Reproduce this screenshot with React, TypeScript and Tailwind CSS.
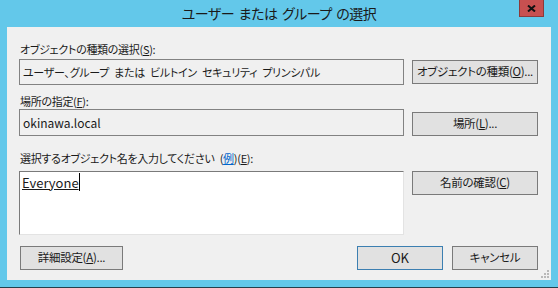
import React from "react";

const font = "font-['Noto_Sans_CJK_JP','Noto_Sans',sans-serif] [font-feature-settings:'palt']";

function Btn({
  children,
  className = "",
  primary = false,
}: {
  children: React.ReactNode;
  className?: string;
  primary?: boolean;
}) {
  return (
    <button
      className={`h-[24px] flex items-center justify-center whitespace-nowrap bg-[#e1e1e1] text-[11.5px] tracking-[-0.3px] text-[#1a1a1a] border ${
        primary ? "border-[#3c7fb1]" : "border-[#7a7a7a]"
      } ${className}`}
    >
      <span>{children}</span>
    </button>
  );
}

function ResizeGrip() {
  const dots = [
    [6, 0],
    [3, 3],
    [6, 3],
    [0, 6],
    [3, 6],
    [6, 6],
  ];
  return (
    <svg width="8" height="8" className="absolute right-[2px] bottom-[2px]">
      {dots.map(([x, y]) => (
        <rect key={`${x}-${y}`} x={x} y={y} width="2" height="2" fill="#b8b8b8" />
      ))}
    </svg>
  );
}

export default function App() {
  return (
    <div className={`w-[558px] h-[288px] bg-[#63c8ea] relative border-b border-[#24404d] ${font}`}>
      {/* title bar */}
      <div className="h-[27px] flex items-center justify-center text-[14px] tracking-[-0.5px] [word-spacing:2px] text-[#1a1a1a]">
        ユーザー または グループ の選択
      </div>
      <button className="absolute right-[14px] top-0 w-[25px] h-[17px] bg-[#c75050] border border-t-0 border-[#8c3a3a] flex items-center justify-center">
        <svg width="9" height="7" viewBox="0 0 9 7">
          <path d="M1 0.5 L8 6.5 M8 0.5 L1 6.5" stroke="#111" strokeWidth="2" />
        </svg>
      </button>

      {/* client area */}
      <div className="ml-[7px] w-[544px] h-[253px] bg-[#f0f0f0] pl-[12px] pt-[14px] relative text-[11px] tracking-[-0.3px] [word-spacing:3px] text-[#1a1a1a]">
        <div className="h-[16px] leading-[16px] pl-[1px]">
          オブジェクトの種類の選択(<span className="underline">S</span>):
        </div>
        <div className="flex mt-[2px]">
          <div className="w-[385px] h-[26px] border border-[#828282] bg-[#f0f0f0] flex items-center pl-[3px]">
            ユーザー、グループ または ビルトイン セキュリティ プリンシパル
          </div>
          <Btn className="ml-[8px] mt-[1px] w-[126px]">
            オブジェクトの種類(<span className="underline">O</span>)...
          </Btn>
        </div>

        <div className="h-[16px] leading-[16px] mt-[8px] pl-[1px]">
          場所の指定(<span className="underline">F</span>):
        </div>
        <div className="flex">
          <div className="w-[385px] h-[27px] border border-[#828282] bg-[#f0f0f0] flex items-center pl-[3px] text-[12px] tracking-normal">
            okinawa.local
          </div>
          <Btn className="ml-[8px] mt-[3px] w-[126px]">
            場所(<span className="underline">L</span>)...
          </Btn>
        </div>

        <div className="h-[16px] leading-[16px] mt-[14px] pl-[1px]">
          選択するオブジェクト名を入力してください (
          <span className="underline text-[#0066cc]">例</span>)(
          <span className="underline">E</span>):
        </div>
        <div className="flex mt-[5px]">
          <div className="w-[385px] h-[64px] bg-white border border-t-[#7a7a7a] border-l-[#7a7a7a] border-r-[#e3e3e3] border-b-[#e3e3e3] pl-[2px] pt-[1px] text-[13px] tracking-normal">
            <span className="underline inline-block leading-[18px]">Everyone</span>
            <span className="inline-block w-px h-[18px] bg-black align-top" />
          </div>
          <Btn className="ml-[8px] w-[126px]">
            名前の確認(<span className="underline">C</span>)
          </Btn>
        </div>

        <div className="flex mt-[11px]">
          <Btn className="ml-[1px] w-[103px]">
            詳細設定(<span className="underline">A</span>)...
          </Btn>
          <Btn primary className="ml-[234px] w-[86px] !text-[13px] !tracking-normal">
            OK
          </Btn>
          <Btn className="ml-[9px] w-[86px]">キャンセル</Btn>
        </div>
        <ResizeGrip />
      </div>
    </div>
  );
}
